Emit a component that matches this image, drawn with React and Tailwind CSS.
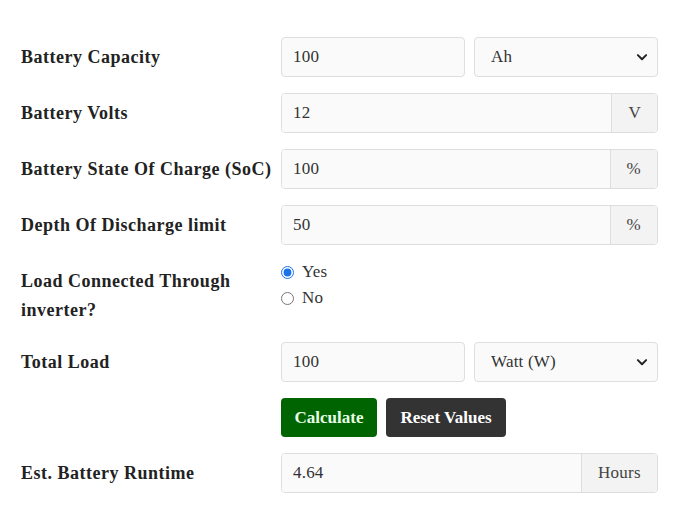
import React, { useState } from 'react';

const labelFont = { fontFamily: '"Liberation Serif", "DejaVu Serif", serif' };

// small chevron used on the unit selects
const Chevron = () => (
  <svg className="pointer-events-none absolute right-[10px] top-1/2 -translate-y-1/2" width="12" height="12" viewBox="0 0 16 16">
    <path d="M2.5 5.5 8 11l5.5-5.5" fill="none" stroke="#222" strokeWidth="2.6" strokeLinecap="round" strokeLinejoin="round" />
  </svg>
);

const Field = ({ value }) => (
  <input
    defaultValue={value}
    className="h-10 w-full min-w-0 rounded border border-[#dedede] bg-[#fafafa] px-[11px] text-[17px] tracking-[0.2px] text-[#333] outline-none"
    style={labelFont}
  />
);

const Unit = ({ options }) => (
  <div className="relative h-10 w-full">
    <select
      className="h-10 w-full appearance-none rounded border border-[#dedede] bg-[#fafafa] pl-4 pr-8 text-[17px] tracking-[0.2px] text-[#333] outline-none"
      style={labelFont}
    >
      {options.map(o => <option key={o}>{o}</option>)}
    </select>
    <Chevron />
  </div>
);

const AddonField = ({ value, unit }) => (
  <div className="flex h-10 w-full overflow-hidden rounded border border-[#dedede]">
    <input
      defaultValue={value}
      className="min-w-0 flex-1 bg-[#fafafa] px-[11px] text-[17px] tracking-[0.2px] text-[#333] outline-none"
      style={labelFont}
    />
    <span className="flex items-center border-l border-[#dedede] bg-[#f3f3f3] px-4 text-[17px] tracking-[0.3px] text-[#444]" style={labelFont}>
      {unit}
    </span>
  </div>
);

const Row = ({ label, children }) => (
  <div className="grid grid-cols-[260px_377px] items-center">
    <div className="text-[18px] font-bold tracking-[0.5px] text-[#222]" style={labelFont}>{label}</div>
    {children}
  </div>
);

export default function App() {
  const [inverter, setInverter] = useState('yes');

  return (
    <div className="min-h-[526px] w-[691px] bg-white pl-[21px] pt-[37px]" style={labelFont}>
      <div className="flex flex-col gap-4">
        <Row label="Battery Capacity">
          <div className="grid grid-cols-2 gap-[9px]">
            <Field value="100" />
            <Unit options={['Ah', 'mAh', 'Wh', 'kWh']} />
          </div>
        </Row>

        <Row label="Battery Volts">
          <AddonField value="12" unit="V" />
        </Row>

        <Row label="Battery State Of Charge (SoC)">
          <AddonField value="100" unit="%" />
        </Row>

        <Row label="Depth Of Discharge limit">
          <AddonField value="50" unit="%" />
        </Row>

        {/* inverter question */}
        <div className="grid h-[65px] grid-cols-[260px_377px] items-start">
          <div className="pt-[6px] text-[18px] font-bold leading-[29px] tracking-[0.5px] text-[#222]">
            Load Connected Through
            <br />
            inverter?
          </div>
          <div className="-mt-[2px] flex flex-col text-[17px] leading-[26px] tracking-[0.2px] text-[#333]">
            {['yes', 'no'].map(v => (
              <label key={v} className="flex items-center gap-[8px]">
                <input
                  type="radio"
                  name="inverter"
                  checked={inverter === v}
                  onChange={() => setInverter(v)}
                  className="m-0 h-[13px] w-[13px] accent-[#1a73e8]"
                />
                {v === 'yes' ? 'Yes' : 'No'}
              </label>
            ))}
          </div>
        </div>

        <Row label="Total Load">
          <div className="grid grid-cols-2 gap-[9px]">
            <Field value="100" />
            <Unit options={['Watt (W)', 'Amps (A)']} />
          </div>
        </Row>

        <div className="grid grid-cols-[260px_377px]">
          <div />
          <div className="flex gap-[9px]">
            <button className="h-[39px] w-[96px] rounded bg-[#006400] text-[17px] font-bold text-[#e6ffe6]">Calculate</button>
            <button className="h-[39px] w-[120px] rounded bg-[#333333] text-[17px] font-bold text-white">Reset Values</button>
          </div>
        </div>

        <Row label="Est. Battery Runtime">
          <AddonField value="4.64" unit="Hours" />
        </Row>
      </div>
    </div>
  );
}
